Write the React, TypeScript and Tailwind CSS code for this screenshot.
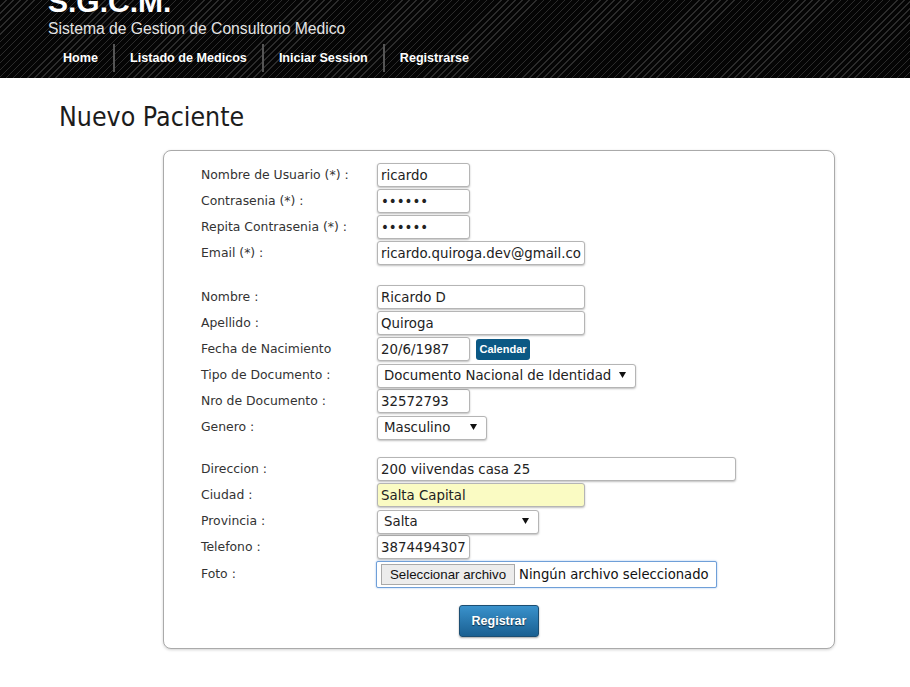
import React from "react";

const inputCls =
  "h-[24px] border border-[#b5b5b5] rounded-[3px] bg-white px-[3px] text-[13.33px] text-[#222] shadow-[0_1px_2px_rgba(0,0,0,0.25)] outline-none [font-family:'DejaVu_Sans',Verdana,sans-serif]";

function Arrow() {
  return (
    <svg width="7" height="6" viewBox="0 0 7 6" className="absolute right-[10px] top-1/2 -translate-y-1/2 pointer-events-none">
      <path d="M0 0 L7 0 L3.5 6 Z" fill="#111" />
    </svg>
  );
}

function Select({ w, value }: { w: string; value: string }) {
  return (
    <div className={`relative ${w}`}>
      <select
        defaultValue={value}
        className="w-full h-[24px] appearance-none border border-[#b5b5b5] rounded-[3px] bg-white pl-[6px] text-[13.33px] text-[#222] shadow-[0_1px_2px_rgba(0,0,0,0.25)] outline-none [font-family:'DejaVu_Sans',Verdana,sans-serif]"
      >
        <option>{value}</option>
      </select>
      <Arrow />
    </div>
  );
}

function Row({ label, children, h = "h-[24px]" }: { label: React.ReactNode; children: React.ReactNode; h?: string }) {
  return (
    <div className={`flex items-center ${h} mb-[2px]`}>
      <div className="w-[176px] text-[12.4px] text-[#333]">{label}</div>
      <div className="flex items-center">{children}</div>
    </div>
  );
}

export default function App() {
  const navItems = ["Home", "Listado de Medicos", "Iniciar Session", "Registrarse"];
  return (
    <div className="min-h-[687px] bg-white [font-family:'DejaVu_Sans',Verdana,sans-serif]">
      <header className="h-[78px] overflow-hidden bg-[#050505] bg-[repeating-linear-gradient(135deg,#050505_0px,#050505_4px,#2c2c2c_4px,#2c2c2c_5px)] pl-[48px] [font-family:'Liberation_Sans',Arial,sans-serif]">
        <div className="mt-[-13px] h-[30px] text-[30px] leading-[30px] font-bold text-white">S.G.C.M.</div>
        <div className="mt-[2px] h-[20px] text-[15.7px] leading-[20px] text-[#e4e4e4]">Sistema de Gestion de Consultorio Medico</div>
        <nav className="mt-[5px] flex h-[28px]">
          {navItems.map((item, i) => (
            <div
              key={item}
              className={`flex items-center px-[15px] text-[12.6px] font-bold text-white ${i < navItems.length - 1 ? "border-r-2 border-[#555]" : ""}`}
            >
              {item}
            </div>
          ))}
        </nav>
      </header>

      <main>
        <h1 className="mt-[25px] ml-[59px] h-[28px] text-[26.5px] leading-[28px] text-[#1c1c1c] [font-family:'DejaVu_Sans_Condensed','DejaVu_Sans',sans-serif]">
          Nuevo Paciente
        </h1>

        <div className="mt-[19px] ml-[163px] w-[672px] rounded-[8px] border border-[#aaaaaa] bg-white pl-[37px] pt-[12px] pb-[11px] shadow-[0_1px_3px_rgba(0,0,0,0.18)]">
          <Row label="Nombre de Usuario (*) :">
            <input className={`${inputCls} w-[93px]`} defaultValue="ricardo" />
          </Row>
          <Row label="Contrasenia (*) :">
            <input type="password" className={`${inputCls} w-[93px]`} defaultValue="123456" />
          </Row>
          <Row label="Repita Contrasenia (*) :">
            <input type="password" className={`${inputCls} w-[93px]`} defaultValue="123456" />
          </Row>
          <Row label="Email (*) :">
            <input className={`${inputCls} w-[208px]`} defaultValue="ricardo.quiroga.dev@gmail.com" />
          </Row>

          <div className="h-[18px]" />

          <Row label="Nombre :">
            <input className={`${inputCls} w-[208px]`} defaultValue="Ricardo D" />
          </Row>
          <Row label="Apellido :">
            <input className={`${inputCls} w-[208px]`} defaultValue="Quiroga" />
          </Row>
          <Row label="Fecha de Nacimiento">
            <input className={`${inputCls} w-[93px]`} defaultValue="20/6/1987" />
            <button className="ml-[6px] h-[21px] w-[54px] rounded-[3px] bg-[#0b5884] text-[11px] font-bold text-white [font-family:'Liberation_Sans',Arial,sans-serif]">
              Calendar
            </button>
          </Row>
          <Row label="Tipo de Documento :">
            <Select w="w-[259px]" value="Documento Nacional de Identidad" />
          </Row>
          <Row label="Nro de Documento :">
            <input className={`${inputCls} w-[93px]`} defaultValue="32572793" />
          </Row>
          <Row label="Genero :">
            <Select w="w-[110px]" value="Masculino" />
          </Row>

          <div className="h-[16px]" />

          <Row label="Direccion :">
            <input className={`${inputCls} w-[359px]`} defaultValue="200 viivendas casa 25" />
          </Row>
          <Row label="Ciudad :">
            <input className={`${inputCls} w-[208px] !bg-[#fafbc3]`} defaultValue="Salta Capital" />
          </Row>
          <Row label="Provincia :">
            <Select w="w-[162px]" value="Salta" />
          </Row>
          <Row label="Telefono :">
            <input className={`${inputCls} w-[93px]`} defaultValue="3874494307" />
          </Row>
          <Row label="Foto :" h="h-[27px]">
            <div className="ml-[-1px] flex h-[27px] w-[341px] items-center rounded-[2px] border border-[#6f9fd8] bg-white pl-[4px] shadow-[0_0_2px_rgba(80,140,220,0.6)]">
              <span className="flex h-[21px] items-center border border-[#a9a9a9] bg-[#ececec] px-[8px] text-[13.3px] text-[#111] [font-family:'Liberation_Sans',Arial,sans-serif]">
                Seleccionar archivo
              </span>
              <span className="ml-[4px] text-[13.2px] text-[#111]">Ningún archivo seleccionado</span>
            </div>
          </Row>

          <div className="mt-[17px] flex justify-center pr-[37px]">
            <button className="h-[32px] w-[80px] rounded-[3px] border border-[#1c4e72] bg-gradient-to-b from-[#3a92cc] to-[#1a6092] text-[12.5px] font-bold text-white [text-shadow:0_1px_1px_rgba(0,0,0,0.6)] shadow-[0_1px_2px_rgba(0,0,0,0.35)] [font-family:'Liberation_Sans',Arial,sans-serif]">
              Registrar
            </button>
          </div>
        </div>
      </main>
    </div>
  );
}
